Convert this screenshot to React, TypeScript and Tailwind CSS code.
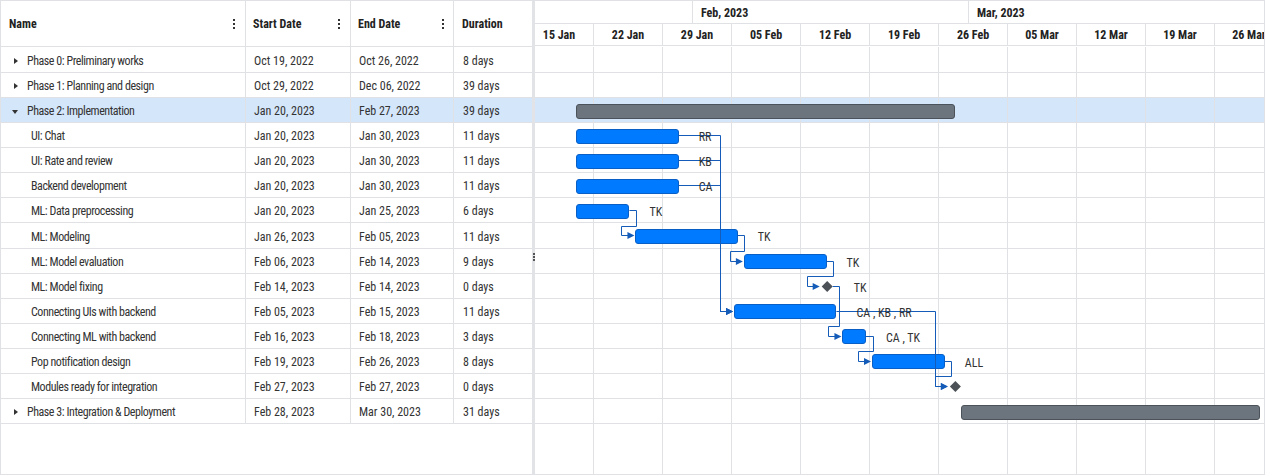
import React from "react";

const DAY = 69 / 7;
const OFF = -11;
const X = (d: number) => OFF + d * DAY;
const PITCH = 25.08;
const T = (k: number) => (k === 0 ? -1 : 25 + PITCH * (k - 1));
const LY = (k: number) => Math.floor(T(k) + 13.5) + 0.5;
const half = (v: number) => Math.round(v - 0.5) + 0.5;

type GridRow = {
  name: string;
  start: string;
  end: string;
  dur: string;
  child?: boolean;
  caret?: "right" | "down";
  hl?: boolean;
};

const gridRows: GridRow[] = [
  { name: "Phase 0: Preliminary works", start: "Oct 19, 2022", end: "Oct 26, 2022", dur: "8 days", caret: "right" },
  { name: "Phase 1: Planning and design", start: "Oct 29, 2022", end: "Dec 06, 2022", dur: "39 days", caret: "right" },
  { name: "Phase 2: Implementation", start: "Jan 20, 2023", end: "Feb 27, 2023", dur: "39 days", caret: "down", hl: true },
  { name: "UI: Chat", start: "Jan 20, 2023", end: "Jan 30, 2023", dur: "11 days", child: true },
  { name: "UI: Rate and review", start: "Jan 20, 2023", end: "Jan 30, 2023", dur: "11 days", child: true },
  { name: "Backend development", start: "Jan 20, 2023", end: "Jan 30, 2023", dur: "11 days", child: true },
  { name: "ML: Data preprocessing", start: "Jan 20, 2023", end: "Jan 25, 2023", dur: "6 days", child: true },
  { name: "ML: Modeling", start: "Jan 26, 2023", end: "Feb 05, 2023", dur: "11 days", child: true },
  { name: "ML: Model evaluation", start: "Feb 06, 2023", end: "Feb 14, 2023", dur: "9 days", child: true },
  { name: "ML: Model fixing", start: "Feb 14, 2023", end: "Feb 14, 2023", dur: "0 days", child: true },
  { name: "Connecting UIs with backend", start: "Feb 05, 2023", end: "Feb 15, 2023", dur: "11 days", child: true },
  { name: "Connecting ML with backend", start: "Feb 16, 2023", end: "Feb 18, 2023", dur: "3 days", child: true },
  { name: "Pop notification design", start: "Feb 19, 2023", end: "Feb 26, 2023", dur: "8 days", child: true },
  { name: "Modules ready for integration", start: "Feb 27, 2023", end: "Feb 27, 2023", dur: "0 days", child: true },
  { name: "Phase 3: Integration & Deployment", start: "Feb 28, 2023", end: "Mar 30, 2023", dur: "31 days", caret: "right" },
];

type Bar = { row: number; kind: "task" | "summary" | "ms"; s: number; e?: number; label?: string };

const bars: Bar[] = [
  { row: 2, kind: "summary", s: 5, e: 44 },
  { row: 3, kind: "task", s: 5, e: 16, label: "RR" },
  { row: 4, kind: "task", s: 5, e: 16, label: "KB" },
  { row: 5, kind: "task", s: 5, e: 16, label: "CA" },
  { row: 6, kind: "task", s: 5, e: 11, label: "TK" },
  { row: 7, kind: "task", s: 11, e: 22, label: "TK" },
  { row: 8, kind: "task", s: 22, e: 31, label: "TK" },
  { row: 9, kind: "ms", s: 30, label: "TK" },
  { row: 10, kind: "task", s: 21, e: 32, label: "CA , KB , RR" },
  { row: 11, kind: "task", s: 32, e: 35, label: "CA , TK" },
  { row: 12, kind: "task", s: 35, e: 43, label: "ALL" },
  { row: 13, kind: "ms", s: 43 },
  { row: 14, kind: "summary", s: 44, e: 75 },
];

const byRow = (r: number) => bars.find((b) => b.row === r)!;
const rightOf = (b: Bar) => (b.kind === "ms" ? X(b.s) + 13 : X(b.e!) - 3);
const tipOf = (b: Bar) => (b.kind === "ms" ? X(b.s) : X(b.s) + 2);
const xlOf = (b: Bar) => (b.kind === "ms" ? X(b.s) - 12 : X(b.s) - 10.5);

const links: [number, number][] = [
  [3, 10],
  [4, 10],
  [5, 10],
  [6, 7],
  [7, 8],
  [8, 9],
  [9, 11],
  [10, 13],
  [11, 12],
  [12, 13],
];

function linkPath(a: Bar, b: Bar) {
  const y1 = LY(a.row);
  const y2 = LY(b.row);
  const x1 = rightOf(a);
  const xl = half(xlOf(b));
  const xr = half(rightOf(a) + 7);
  const tip = tipOf(b);
  let d: string;
  if (xl >= xr) {
    d = `M${x1} ${y1} H${xl} V${y2} H${tip - 6}`;
  } else {
    const ym = half(T(b.row) + 4);
    d = `M${x1} ${y1} H${xr} V${ym} H${xl} V${y2} H${tip - 6}`;
  }
  const arrow = `${tip - 7},${y2 - 3.5} ${tip},${y2} ${tip - 7},${y2 + 3.5}`;
  return { d, arrow };
}

const weeks = ["15 Jan", "22 Jan", "29 Jan", "05 Feb", "12 Feb", "19 Feb", "26 Feb", "05 Mar", "12 Mar", "19 Mar", "26 Mar"];

const Menu = () => (
  <div className="flex flex-col gap-[2px]">
    <i className="block w-[2px] h-[2px] bg-[#333]" />
    <i className="block w-[2px] h-[2px] bg-[#333]" />
    <i className="block w-[2px] h-[2px] bg-[#333]" />
  </div>
);

const rowH = (i: number) => (i === 0 ? "h-[26px]" : "h-[25.08px]");

export default function App() {
  return (
    <div className="w-[1265px] h-[475px] flex border border-[#dfe1e5] bg-white text-[12px] text-[#333] font-['Liberation_Sans_Narrow','Roboto_Condensed',Roboto,sans-serif] font-stretch-condensed">
      {/* Grid */}
      <div className="w-[531px] shrink-0 flex flex-col">
        <div className="h-[46px] shrink-0 flex border-b border-[#dfe1e5] font-bold text-[#222]">
          <div className="w-[245px] shrink-0 border-r border-[#dfe1e5] flex items-center justify-between pl-[8px] pr-[10px]">
            <span>Name</span>
            <Menu />
          </div>
          <div className="w-[105px] shrink-0 border-r border-[#dfe1e5] flex items-center justify-between pl-[7px] pr-[10px]">
            <span>Start Date</span>
            <Menu />
          </div>
          <div className="w-[103px] shrink-0 border-r border-[#dfe1e5] flex items-center justify-between pl-[7px] pr-[9px]">
            <span>End Date</span>
            <Menu />
          </div>
          <div className="flex-1 flex items-center pl-[8px]">
            <span>Duration</span>
          </div>
        </div>
        {gridRows.map((r, i) => (
          <div
            key={i}
            className={`${rowH(i)} shrink-0 flex border-b border-[#dfe1e5] ${r.hl ? "bg-[#d4e6fa]" : ""}`}
          >
            <div className={`w-[245px] shrink-0 border-r border-[#dfe1e5] flex items-center pt-[2px] ${r.child ? "pl-[30px]" : "pl-[11px]"}`}>
              {!r.child && (
                <span className="w-[15px] shrink-0 flex items-center">
                  {r.caret === "right" ? (
                    <i className="block ml-[2px] w-0 h-0 border-y-[3.5px] border-y-transparent border-l-[4px] border-l-[#333]" />
                  ) : (
                    <i className="block w-0 h-0 border-x-[3px] border-x-transparent border-t-[4px] border-t-[#333] mt-[1px]" />
                  )}
                </span>
              )}
              <span className="whitespace-nowrap tracking-[-0.45px]">{r.name}</span>
            </div>
            <div className="w-[105px] shrink-0 border-r border-[#dfe1e5] flex items-center pt-[2px] pl-[8px] whitespace-nowrap">{r.start}</div>
            <div className="w-[103px] shrink-0 border-r border-[#dfe1e5] flex items-center pt-[2px] pl-[8px] whitespace-nowrap">{r.end}</div>
            <div className="flex-1 flex items-center pt-[2px] pl-[9px] whitespace-nowrap">{r.dur}</div>
          </div>
        ))}
      </div>

      {/* Splitter */}
      <div className="w-[3px] shrink-0 bg-[#e1e3e7] relative">
        <div className="absolute top-[252px] left-[1px] flex flex-col gap-[1px]">
          <i className="block w-[2px] h-[2px] bg-[#555]" />
          <i className="block w-[2px] h-[2px] bg-[#555]" />
          <i className="block w-[2px] h-[2px] bg-[#555]" />
        </div>
      </div>

      {/* Chart */}
      <div className="flex-1 min-w-0 flex flex-col overflow-hidden">
        <div className="h-[46px] shrink-0 flex flex-col font-bold text-[#222]">
          <div className="h-[23px] shrink-0 flex border-b border-[#dfe1e5] ml-[-10px]">
            <div className="w-[168px] shrink-0 border-r border-[#dfe1e5]" />
            <div className="w-[276px] shrink-0 border-r border-[#dfe1e5] flex items-center pl-[8px] pt-[2px]">Feb, 2023</div>
            <div className="flex-1 flex items-center pl-[8px] pt-[2px]">Mar, 2023</div>
          </div>
          <div className="h-[22px] shrink-0 flex border-b border-[#dfe1e5] ml-[-10px]">
            {weeks.map((w) => (
              <div key={w} className="w-[69px] shrink-0 border-r border-[#dfe1e5] flex items-center justify-center whitespace-nowrap pt-[1px]">
                {w}
              </div>
            ))}
          </div>
        </div>

        <div className="relative flex-1 overflow-hidden">
          {gridRows.map((r, i) => (
            <div key={i} className={`${rowH(i)} border-b border-[#dfe1e5] ${r.hl ? "bg-[#d4e6fa]" : ""}`} />
          ))}
          <div className="absolute top-0 bottom-0 left-[-10px] flex pointer-events-none">
            {weeks.map((w) => (
              <div key={w} className="w-[69px] shrink-0 h-full border-r border-[#dfe1e5]" />
            ))}
          </div>

          {bars
            .filter((b) => b.kind !== "ms")
            .map((b, i) => {
              const x1 = X(b.s) + 3;
              const x2 = X(b.e!) - 3;
              return (
                <div
                  key={i}
                  className={`absolute rounded-[3px] border ${
                    b.kind === "summary" ? "bg-[#6c757d] border-[#4b5259]" : "bg-[#007bff] border-[#0a5fc7]"
                  }`}
                  style={{ left: x1, width: x2 - x1, top: T(b.row) + 6.5, height: 15 }}
                />
              );
            })}

          <svg className="absolute left-0 top-0 pointer-events-none" width={740} height={430}>
            {links.map(([a, b], i) => {
              const p = linkPath(byRow(a), byRow(b));
              return (
                <g key={i}>
                  <path d={p.d} fill="none" stroke="#155cb8" strokeWidth={1} />
                  <polygon points={p.arrow} fill="#155cb8" />
                </g>
              );
            })}
            {bars
              .filter((b) => b.kind === "ms")
              .map((b, i) => {
                const cx = X(b.s) + 7.5;
                const cy = LY(b.row);
                return (
                  <polygon
                    key={i}
                    points={`${cx - 5.5},${cy} ${cx},${cy - 5.5} ${cx + 5.5},${cy} ${cx},${cy + 5.5}`}
                    fill="#4b5157"
                  />
                );
              })}
          </svg>

          {bars
            .filter((b) => b.label)
            .map((b, i) => {
              const left = b.kind === "ms" ? X(b.s) + 13 + 21 : X(b.e!) - 3 + 20;
              return (
                <div
                  key={i}
                  className="absolute h-[16px] leading-[16px] whitespace-nowrap text-[#333]"
                  style={{ left, top: LY(b.row) - 7 }}
                >
                  {b.label}
                </div>
              );
            })}
        </div>
      </div>
    </div>
  );
}
